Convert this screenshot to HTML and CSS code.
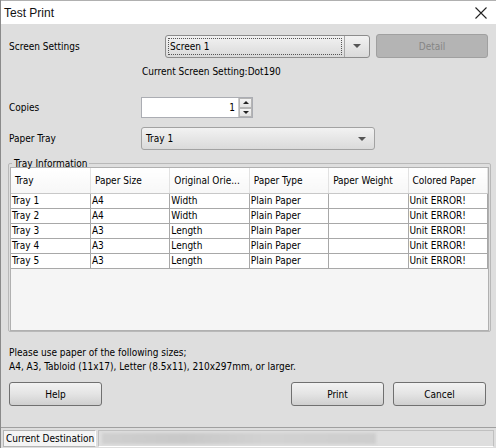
FILE: index.html
```html
<!DOCTYPE html>
<html>
<head>
  <title>Test Print</title>
  <link rel="stylesheet" href="styles.css">
</head>
<body>

<div class="window">
  <div class="titlebar">
    <span class="title">Test Print</span>
    <svg class="close" width="12" height="12" viewBox="0 0 12 12">
      <path d="M0.5 0.5 L11.5 11.5 M11.5 0.5 L0.5 11.5" stroke="#222" stroke-width="1.1" fill="none"/>
    </svg>
  </div>

  <div class="content">
    <div class="row screen-row">
      <label class="lbl wide">Screen Settings</label>
      <div class="combo focused screen-combo">
        <span class="combo-text"><span class="focus-rect">Screen 1</span></span>
        <span class="combo-btn"><span class="arrow"></span></span>
      </div>
      <button class="btn detail" disabled>Detail</button>
    </div>

    <div class="current-setting">Current Screen Setting:Dot190</div>

    <div class="row copies-row">
      <label class="lbl">Copies</label>
      <div class="spin">
        <span class="spin-value">1</span>
        <span class="spin-btns">
          <span class="spin-up"><span class="tri-up"></span></span>
          <span class="spin-down"><span class="tri-down"></span></span>
        </span>
      </div>
    </div>

    <div class="row tray-row">
      <label class="lbl">Paper Tray</label>
      <div class="combo tray-combo">
        <span class="combo-text">Tray 1</span>
        <span class="combo-arrow"><span class="arrow"></span></span>
      </div>
    </div>

    <fieldset class="group">
      <legend>Tray Information</legend>
      <div class="table-box">
        <table class="tray-table">
          <thead>
            <tr>
              <th>Tray</th>
              <th>Paper Size</th>
              <th>Original Orie...</th>
              <th>Paper Type</th>
              <th>Paper Weight</th>
              <th>Colored Paper</th>
            </tr>
          </thead>
          <tbody>
            <tr><td>Tray 1</td><td>A4</td><td>Width</td><td>Plain Paper</td><td></td><td>Unit ERROR!</td></tr>
            <tr><td>Tray 2</td><td>A4</td><td>Width</td><td>Plain Paper</td><td></td><td>Unit ERROR!</td></tr>
            <tr><td>Tray 3</td><td>A3</td><td>Length</td><td>Plain Paper</td><td></td><td>Unit ERROR!</td></tr>
            <tr><td>Tray 4</td><td>A3</td><td>Length</td><td>Plain Paper</td><td></td><td>Unit ERROR!</td></tr>
            <tr><td>Tray 5</td><td>A3</td><td>Length</td><td>Plain Paper</td><td></td><td>Unit ERROR!</td></tr>
          </tbody>
        </table>
      </div>
    </fieldset>

    <p class="note">Please use paper of the following sizes;<br>A4, A3, Tabloid (11x17), Letter (8.5x11), 210x297mm, or larger.</p>

    <div class="buttons">
      <button class="btn">Help</button>
      <span class="spacer"></span>
      <button class="btn">Print</button>
      <button class="btn">Cancel</button>
    </div>
  </div>

  <div class="statusbar">
    <span class="status-label">Current Destination</span>
    <span class="status-value"><span class="blur"></span></span>
  </div>
</div>

</body>
</html>
```

FILE: styles.css
```css
body {
  margin: 0;
  font-family: Tahoma, "DejaVu Sans Condensed", "Liberation Sans", sans-serif;
  font-size: 10px;
  color: #000;
  background: #dedede;
}

.window {
  width: 496px;
  height: 448px;
  display: flex;
  flex-direction: column;
  background: #dedede;
  border-left: 1px solid #8a8a8a;
  box-sizing: border-box;
  overflow: hidden;
}

.titlebar {
  height: 24px;
  flex: none;
  display: flex;
  align-items: center;
  justify-content: space-between;
  padding: 0 9px 0 3px;
  background: #fff;
  border-top: 1px solid #b0b0b0;
  box-sizing: border-box;
}

.title {
  font-family: "Liberation Sans", sans-serif;
  font-size: 12px;
  color: #111;
}

.content {
  flex: 1;
  padding: 10px 7px 0 8px;
  display: flex;
  flex-direction: column;
}

.row {
  display: flex;
  align-items: center;
}

.lbl {
  width: 132px;
  flex: none;
}

.lbl.wide {
  width: 156px;
}

/* combo boxes */
.combo {
  display: flex;
  height: 23px;
  box-sizing: border-box;
  border: 1px solid #a2a2a2;
  border-radius: 3px;
  background: linear-gradient(#f2f2f2, #e6e6e6 50%, #dadada);
  align-items: stretch;
}

.combo-text {
  flex: 1;
  display: flex;
  align-items: center;
  padding-left: 4px;
}

.screen-combo {
  width: 205px;
  border-color: #8c8c8c;
}

.screen-combo .combo-text {
  padding: 2px;
}

.focus-rect {
  flex: 1;
  align-self: stretch;
  display: flex;
  align-items: center;
  padding-left: 1px;
  border: 1px dotted #555;
}

.combo-btn {
  width: 24px;
  border-left: 1px solid #a8a8a8;
  display: flex;
  align-items: center;
  justify-content: center;
}

.combo-arrow {
  width: 24px;
  display: flex;
  align-items: center;
  justify-content: center;
}

.arrow {
  width: 0;
  height: 0;
  border-left: 4px solid transparent;
  border-right: 4px solid transparent;
  border-top: 4px solid #555;
}

.tray-combo {
  width: 234px;
}

.btn {
  height: 24px;
  width: 93px;
  font: inherit;
  color: #000;
  border: 1px solid #707070;
  border-radius: 3px;
  background: linear-gradient(#f2f2f2, #e4e4e4 50%, #cfcfcf);
  padding: 0;
}

.btn.detail {
  width: 112px;
  margin-left: 6px;
  height: 24px;
  background: #b4b4b4;
  border-color: #a0a0a0;
  color: #858585;
}

.current-setting {
  margin: 7px 0 0 133px;
  line-height: 14px;
}

.copies-row {
  margin-top: 18px;
}

.spin {
  width: 112px;
  height: 21px;
  box-sizing: border-box;
  border: 1px solid #abadb3;
  background: #fff;
  display: flex;
}

.spin-value {
  flex: 1;
  text-align: right;
  padding-right: 3px;
  line-height: 19px;
}

.spin-btns {
  width: 13px;
  display: flex;
  flex-direction: column;
  border-left: 1px solid #ccc;
}

.spin-up, .spin-down {
  flex: 1;
  display: flex;
  align-items: center;
  justify-content: center;
  background: linear-gradient(#f4f4f4, #e2e2e2);
  border: 1px solid #b5b5b5;
}

.tri-up {
  border-left: 3px solid transparent;
  border-right: 3px solid transparent;
  border-bottom: 3px solid #222;
}

.tri-down {
  border-left: 3px solid transparent;
  border-right: 3px solid transparent;
  border-top: 3px solid #222;
}

.tray-row {
  margin-top: 9px;
}

/* tray information group */
.group {
  margin: 7px 0 0 -1px;
  padding: 0 0 0 1px;
  border: 1px solid #b8b8b8;
  border-radius: 2px;
  min-width: 0;
  width: 483px;
  box-sizing: border-box;
}

.group legend {
  padding: 0 2px;
  margin-left: 2px;
  line-height: 13px;
}

.table-box {
  height: 164px;
  margin-top: -3px;
  background: #f5f5f5;
  border: 1px solid #b0b0b0;
  box-sizing: border-box;
  margin-right: 1px;
}

.tray-table {
  border-collapse: collapse;
  table-layout: fixed;
  width: 477px;
}

.tray-table th {
  height: 25px;
  font-weight: normal;
  text-align: left;
  padding: 0 4px;
  white-space: nowrap;
  overflow: hidden;
  background: linear-gradient(#fff, #f7f7f7);
  border-right: 1px solid #e2e2e2;
  border-bottom: 1px solid #c8c8c8;
}

.tray-table td {
  height: 14px;
  padding: 0 0 0 1px;
  line-height: 14px;
  background: #fff;
  border: 1px solid #a8a8a8;
  border-top: none;
  white-space: nowrap;
  overflow: hidden;
}

.tray-table td:first-child {
  border-left: none;
}

.note {
  margin: 14px 0 0;
  line-height: 14px;
}

.buttons {
  display: flex;
  gap: 9px;
  margin: 8px 3px 0 0;
}

.spacer {
  flex: 1;
}

.statusbar {
  height: 21px;
  flex: none;
  display: flex;
  align-items: center;
  gap: 2px;
  padding: 0 2px;
  border-top: 1px solid #a0a0a0;
  box-sizing: border-box;
  background: #dedede;
}

.status-label {
  width: 93px;
  height: 17px;
  box-sizing: border-box;
  border: 1px solid #b5b5b5;
  border-right-color: #fff;
  background: #f4f4f4;
  line-height: 15px;
  padding-left: 2px;
  white-space: nowrap;
  overflow: hidden;
}

.status-value {
  flex: 1;
  height: 17px;
  box-sizing: border-box;
  border: 1px solid #c0c0c0;
  border-bottom-color: #fff;
  display: flex;
  align-items: center;
  padding-left: 3px;
  overflow: hidden;
}

.blur {
  width: 274px;
  height: 11px;
  background: linear-gradient(90deg, #cfcfcf, #c8c8c8 30%, #d2d2d2 60%, #cdcdcd);
  filter: blur(1.5px);
}
```
